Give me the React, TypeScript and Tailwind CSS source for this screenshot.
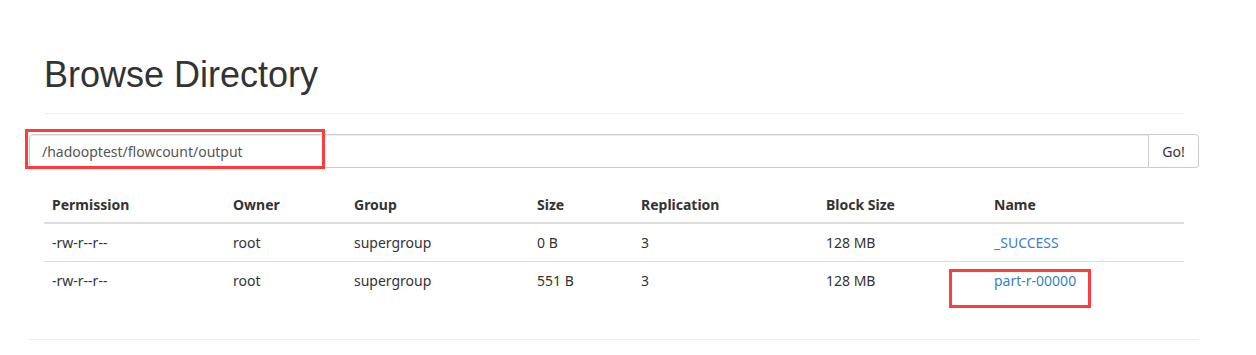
import React from "react";

const cols = [
  { label: "Permission", w: "w-[181px]" },
  { label: "Owner", w: "w-[121px]" },
  { label: "Group", w: "w-[183px]" },
  { label: "Size", w: "w-[104px]" },
  { label: "Replication", w: "w-[185px]" },
  { label: "Block Size", w: "w-[168px]" },
  { label: "Name", w: "flex-1" },
];

const rows = [
  ["-rw-r--r--", "root", "supergroup", "0 B", "3", "128 MB", "_SUCCESS"],
  ["-rw-r--r--", "root", "supergroup", "551 B", "3", "128 MB", "part-r-00000"],
];

export default function App() {
  return (
    <div
      className="relative w-[1256px] h-[355px] bg-white overflow-hidden text-[14px] text-[#333]"
      style={{ fontFamily: '"Noto Sans", "Open Sans", sans-serif' }}
    >
      <div className="ml-[29px] w-[1170px]">
        <div className="mx-[15px] pt-[55px] pb-[18px] border-b border-[#eee]">
          <h1
            className="text-[36px] leading-[40px] h-[40px] font-normal text-[#333]"
            style={{ fontFamily: '"Liberation Sans", Arial, sans-serif' }}
          >
            Browse Directory
          </h1>
        </div>

        <div className="mt-[20px] flex h-[34px]">
          <div className="flex-1 flex items-center border border-[#ccc] rounded-l-[4px] pl-[12px] text-[#555] shadow-[inset_0_1px_1px_rgba(0,0,0,0.075)]">
            /hadooptest/flowcount/output
          </div>
          <div className="w-[50px] flex items-center justify-center border border-l-0 border-[#ccc] rounded-r-[4px] text-[#333]">
            Go!
          </div>
        </div>

        <div className="mx-[15px] mt-[18px] mb-[20px]">
          <div className="flex h-[38px] items-end pb-[7px] border-b-2 border-[#ddd] font-bold">
            {cols.map((c) => (
              <div key={c.label} className={`${c.w} px-[8px] leading-[20px]`}>
                {c.label}
              </div>
            ))}
          </div>
          {rows.map((r, i) => (
            <div
              key={i}
              className={`flex items-center ${i > 0 ? "border-t border-[#ddd] h-[38px]" : "h-[37px]"}`}
            >
              {r.map((v, j) => (
                <div key={j} className={`${cols[j].w} px-[8px] leading-[20px]`}>
                  {j === 6 ? <span className="text-[#3b7fc4]">{v}</span> : v}
                </div>
              ))}
            </div>
          ))}
        </div>

        <div className="mt-[40px] border-t border-[#eee]" />
      </div>

      <div className="absolute left-[25px] top-[129px] w-[300px] h-[40px] border-[3px] border-[#ff3b3b]" />
      <div className="absolute left-[949px] top-[269px] w-[142px] h-[39px] border-[3px] border-[#ff3b3b]" />
    </div>
  );
}
